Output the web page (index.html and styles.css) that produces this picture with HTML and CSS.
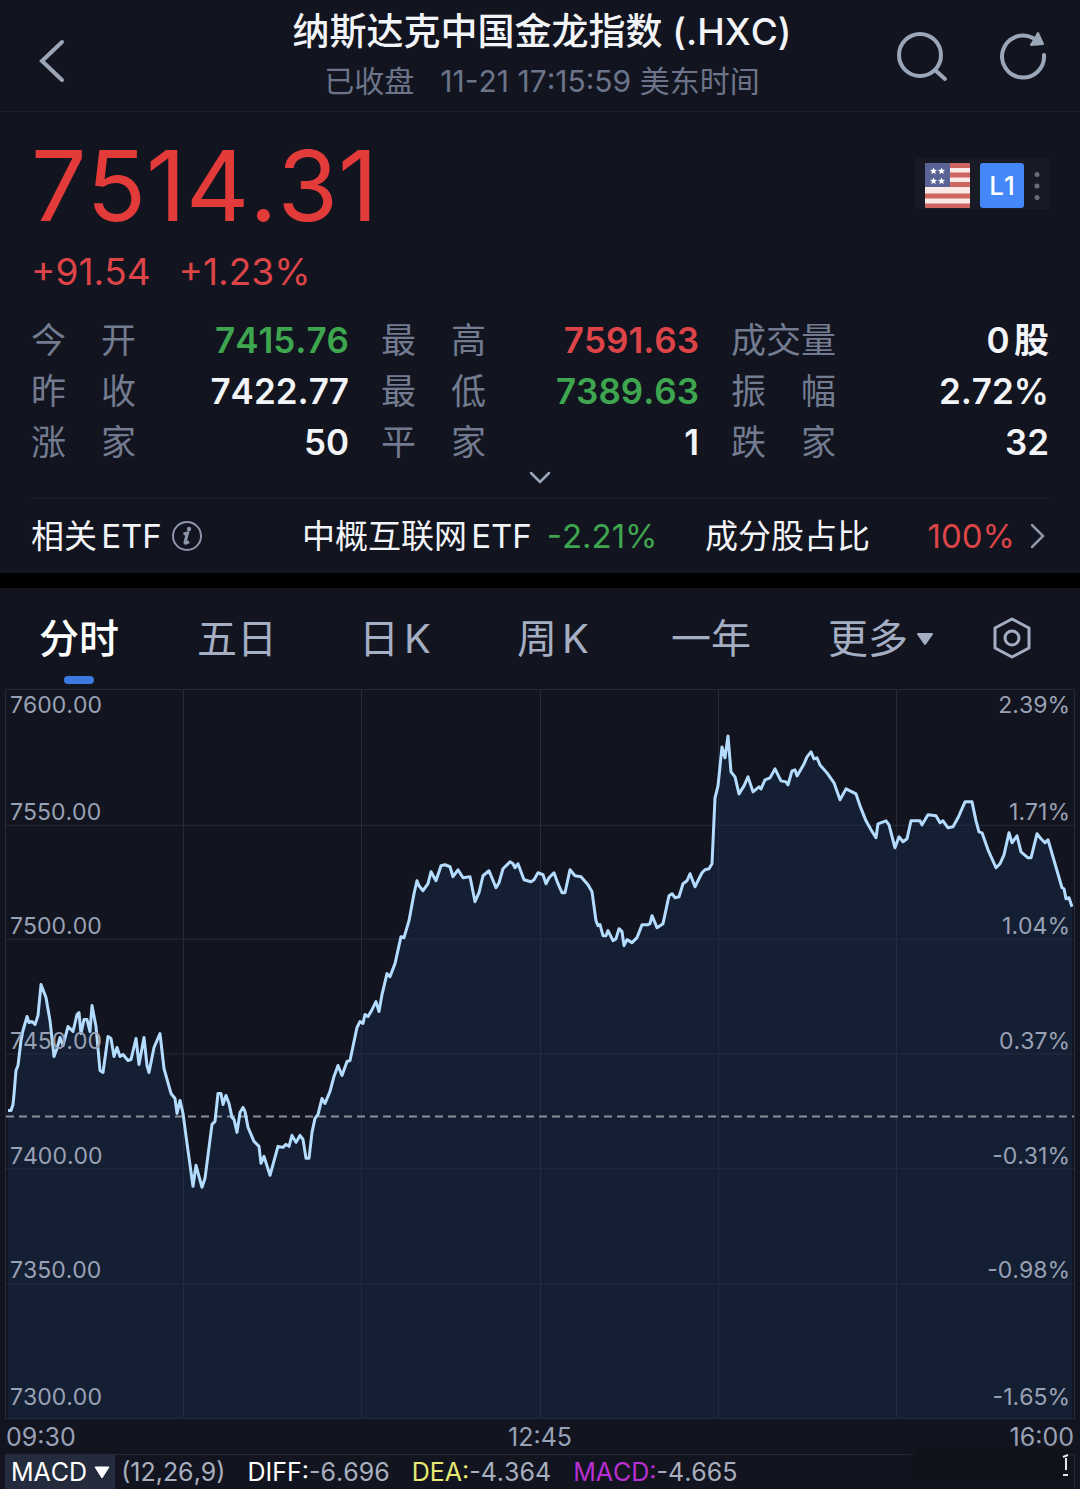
FILE: index.html
```html
<!DOCTYPE html>
<html lang="zh-CN">
<head>
<meta charset="utf-8">
<meta name="viewport" content="width=device-width, initial-scale=1">
<title>纳斯达克中国金龙指数 (.HXC)</title>
<link rel="stylesheet" href="styles.css">
</head>
<body>
<header class="topbar">
  <button class="icon-btn back" aria-label="返回">
    <svg width="28" height="44" viewBox="0 0 28 44"><path d="M24 3 4 22l20 19" fill="none" stroke="currentColor" stroke-width="4" stroke-linecap="round"/></svg>
  </button>
  <div class="heading">
    <h1 class="title">纳斯达克中国金龙指数 (.HXC)</h1>
    <p class="status"><span>已收盘</span><time>11-21 17:15:59 美东时间</time></p>
  </div>
  <div class="actions">
    <button class="icon-btn" aria-label="搜索">
      <svg width="52" height="52" viewBox="0 0 52 52" fill="none" stroke="currentColor" stroke-width="4" stroke-linecap="round"><circle cx="24" cy="25" r="21"/><path d="m39 40 10 9"/></svg>
    </button>
    <button class="icon-btn" aria-label="刷新">
      <svg width="48" height="48" viewBox="0 0 48 48"><path d="M44 23a21 21 0 1 1-11-17" fill="none" stroke="currentColor" stroke-width="4" stroke-linecap="round"/><path d="m38 1 5 11-12 1z" fill="currentColor" stroke="currentColor" stroke-width="2" stroke-linejoin="round"/></svg>
    </button>
  </div>
</header>

<main>
<section class="quote">
  <div class="quote-head">
    <div>
      <p class="price">7514.31</p>
      <p class="change"><span>+91.54</span><span>+1.23%</span></p>
    </div>
    <button class="market" aria-label="美股 L1 行情">
      <svg class="flag" width="45" height="45" viewBox="0 0 45 45">
        <clipPath id="flag-clip"><rect width="45" height="45" rx="2"/></clipPath>
        <g clip-path="url(#flag-clip)">
          <rect width="45" height="45" fill="#fbe9e8"/>
          <path d="M0 2.500h45M0 12h45M0 21.500h45M0 33h45M0 43h45" stroke="#cf655f" stroke-width="5"/>
          <rect width="25" height="24" fill="#5a6396"/>
          <path id="star" d="m8.500 4.500 1 2.300 2.500.2-1.900 1.600.6 2.400-2.200-1.300L6.300 11l.6-2.400L5 7l2.500-.2z" fill="#fff"/>
          <use href="#star" x="8"/><use href="#star" y="10"/><use href="#star" x="8" y="10"/>
        </g>
      </svg>
      <span class="level">L1</span>
      <svg width="6" height="28" viewBox="0 0 6 28" fill="#696d7b"><circle cx="3" cy="2.500" r="2.500"/><circle cx="3" cy="14" r="2.500"/><circle cx="3" cy="25.500" r="2.500"/></svg>
    </button>
  </div>

  <dl class="stats">
    <div class="stat"><dt>今开</dt><dd class="down">7415.76</dd></div>
    <div class="stat"><dt>最高</dt><dd class="up">7591.63</dd></div>
    <div class="stat"><dt>成交量</dt><dd>0股</dd></div>
    <div class="stat"><dt>昨收</dt><dd>7422.77</dd></div>
    <div class="stat"><dt>最低</dt><dd class="down">7389.63</dd></div>
    <div class="stat"><dt>振幅</dt><dd>2.72%</dd></div>
    <div class="stat"><dt>涨家</dt><dd>50</dd></div>
    <div class="stat"><dt>平家</dt><dd>1</dd></div>
    <div class="stat"><dt>跌家</dt><dd>32</dd></div>
  </dl>
  <button class="icon-btn expand" aria-label="展开">
    <svg width="22" height="14" viewBox="0 0 22 14"><path d="m2 2 9 9 9-9" fill="none" stroke="currentColor" stroke-width="2.500" stroke-linecap="round"/></svg>
  </button>

  <div class="etf">
    <div class="etf-cell">相关ETF
      <svg class="info" width="32" height="32" viewBox="0 0 32 32"><circle cx="16" cy="16" r="14" fill="none" stroke="currentColor" stroke-width="2"/><circle cx="18" cy="9" r="2.200" fill="currentColor"/><path d="m12.500 14 4-1-2.500 9.500q-.3 2 4-1" fill="none" stroke="currentColor" stroke-width="3"/></svg>
    </div>
    <a class="etf-cell" href="#etf">中概互联网ETF<span class="down">-2.21%</span></a>
    <a class="etf-cell share" href="#share">成分股占比<span class="up">100%</span>
      <svg width="16" height="28" viewBox="0 0 16 28"><path d="m2 3 11 11L2 25" fill="none" stroke="#8d95aa" stroke-width="2.500" stroke-linecap="round"/></svg>
    </a>
  </div>
</section>

<section class="panel">
  <nav class="tabs">
    <button class="tab active">分时</button>
    <button class="tab">五日</button>
    <button class="tab">日K</button>
    <button class="tab">周K</button>
    <button class="tab">一年</button>
    <button class="tab more">更多<svg width="18" height="14" viewBox="0 0 18 14"><path d="M2 2h14L9 12z" fill="currentColor" stroke="currentColor" stroke-width="2" stroke-linejoin="round"/></svg></button>
    <button class="tab" aria-label="设置"><svg width="40" height="44" viewBox="0 0 40 44" fill="none" stroke="currentColor" stroke-width="3" stroke-linejoin="round"><path d="m20 2 17 9v20l-17 9-17-9V11z"/><circle cx="20" cy="21" r="7"/></svg></button>
  </nav>

  <div class="chart">
    <svg class="plot" viewBox="6 689 1068 729" preserveAspectRatio="none">
      <path class="area" d="M8 1110 11 1110 13 1104 14 1094 16 1070 18 1065 21 1040 23 1030 27 1016 29 1022 32 1021 35 1024 38 1015 41 984 46 997 50 1020 54 1056 57 1048 60 1037 63 1045 68 1026 73 1031 77 1014 79 1012 81 1033 84 1019 87 1019 90 1031 92 1005 96 1026 100 1070 103 1072 108 1036 111 1038 114 1056 117 1047 120 1056 123 1054 128 1060 131 1059 136 1038 139 1064 144 1037 147 1065 149 1072 154 1047 160 1033 164 1068 171 1093 175 1098 177 1113 180 1100 183 1113 187 1143 193 1186 196 1165 202 1187 205 1178 212 1124 215 1121 218 1093 221 1093 223 1104 226 1095 229 1103 232 1117 234 1119 237 1132 240 1112 243 1107 245 1111 248 1127 254 1141 259 1146 261 1163 264 1156 270 1175 278 1146 283 1147 286 1144 289 1146 292 1135 296 1142 300 1135 303 1139 306 1158 309 1158 312 1132 315 1118 318 1114 322 1098 325 1103 330 1091 334 1076 338 1065 342 1075 347 1061 350 1060 357 1027 360 1021 363 1023 365 1014 368 1016 371 1011 376 1001 379 1011 382 994 387 973 390 976 395 963 401 936 404 937 409 920 414 893 417 880 419 885 423 890 428 883 431 871 436 880 441 865 445 864 450 866 453 876 458 869 463 877 470 876 475 901 479 892 483 875 489 870 496 887 499 882 503 868 510 861 513 863 515 867 518 863 524 879 531 881 534 879 538 872 543 874 546 883 549 877 554 872 558 883 562 892 565 892 570 869 575 875 581 876 588 884 592 891 596 920 598 925 600 924 603 935 606 935 608 930 613 940 616 938 619 928 622 931 624 945 627 939 632 942 637 937 642 924 648 924 650 923 652 915 657 927 663 923 669 895 672 893 675 897 679 896 683 883 687 880 690 873 695 886 702 872 705 869 709 868 712 863 715 797 718 785 722 746 725 757 728 735 731 771 735 776 739 793 744 785 748 776 753 791 759 786 761 788 765 779 770 777 775 768 781 780 786 781 788 784 792 770 795 769 797 775 804 763 807 756 811 751 814 758 817 757 820 764 827 772 834 782 840 799 846 788 856 793 860 805 866 820 871 829 876 837 878 823 886 820 889 824 895 847 899 836 903 841 907 838 911 820 920 820 922 824 928 814 936 815 940 822 943 820 948 827 953 826 958 817 965 801 972 801 976 820 979 831 982 832 988 849 996 867 1000 863 1004 854 1009 832 1012 842 1017 835 1021 851 1028 857 1031 857 1037 833 1041 838 1045 842 1048 839 1055 863 1062 887 1064 888 1066 898 1069 897 1072 906V1418H8Z"/>
      <path class="grid-line" d="M6 824.500H1074M6 938.500H1074M6 1053.500H1074M6 1168.500H1074M6 1283.500H1074M183.500 689V1418M361.500 689V1418M540.500 689V1418M718.500 689V1418M896.500 689V1418"/>
      <path class="prev-close" d="M6 1116H1074"/>
      <path class="line" d="M8 1110 11 1110 13 1104 14 1094 16 1070 18 1065 21 1040 23 1030 27 1016 29 1022 32 1021 35 1024 38 1015 41 984 46 997 50 1020 54 1056 57 1048 60 1037 63 1045 68 1026 73 1031 77 1014 79 1012 81 1033 84 1019 87 1019 90 1031 92 1005 96 1026 100 1070 103 1072 108 1036 111 1038 114 1056 117 1047 120 1056 123 1054 128 1060 131 1059 136 1038 139 1064 144 1037 147 1065 149 1072 154 1047 160 1033 164 1068 171 1093 175 1098 177 1113 180 1100 183 1113 187 1143 193 1186 196 1165 202 1187 205 1178 212 1124 215 1121 218 1093 221 1093 223 1104 226 1095 229 1103 232 1117 234 1119 237 1132 240 1112 243 1107 245 1111 248 1127 254 1141 259 1146 261 1163 264 1156 270 1175 278 1146 283 1147 286 1144 289 1146 292 1135 296 1142 300 1135 303 1139 306 1158 309 1158 312 1132 315 1118 318 1114 322 1098 325 1103 330 1091 334 1076 338 1065 342 1075 347 1061 350 1060 357 1027 360 1021 363 1023 365 1014 368 1016 371 1011 376 1001 379 1011 382 994 387 973 390 976 395 963 401 936 404 937 409 920 414 893 417 880 419 885 423 890 428 883 431 871 436 880 441 865 445 864 450 866 453 876 458 869 463 877 470 876 475 901 479 892 483 875 489 870 496 887 499 882 503 868 510 861 513 863 515 867 518 863 524 879 531 881 534 879 538 872 543 874 546 883 549 877 554 872 558 883 562 892 565 892 570 869 575 875 581 876 588 884 592 891 596 920 598 925 600 924 603 935 606 935 608 930 613 940 616 938 619 928 622 931 624 945 627 939 632 942 637 937 642 924 648 924 650 923 652 915 657 927 663 923 669 895 672 893 675 897 679 896 683 883 687 880 690 873 695 886 702 872 705 869 709 868 712 863 715 797 718 785 722 746 725 757 728 735 731 771 735 776 739 793 744 785 748 776 753 791 759 786 761 788 765 779 770 777 775 768 781 780 786 781 788 784 792 770 795 769 797 775 804 763 807 756 811 751 814 758 817 757 820 764 827 772 834 782 840 799 846 788 856 793 860 805 866 820 871 829 876 837 878 823 886 820 889 824 895 847 899 836 903 841 907 838 911 820 920 820 922 824 928 814 936 815 940 822 943 820 948 827 953 826 958 817 965 801 972 801 976 820 979 831 982 832 988 849 996 867 1000 863 1004 854 1009 832 1012 842 1017 835 1021 851 1028 857 1031 857 1037 833 1041 838 1045 842 1048 839 1055 863 1062 887 1064 888 1066 898 1069 897 1072 906"/>
    </svg>
    <div class="scale">
      <div class="tick"><span>7600.00</span><span>2.39%</span></div>
      <div class="tick"><span>7550.00</span><span>1.71%</span></div>
      <div class="tick"><span>7500.00</span><span>1.04%</span></div>
      <div class="tick"><span>7450.00</span><span>0.37%</span></div>
      <div class="tick"><span>7400.00</span><span>-0.31%</span></div>
      <div class="tick"><span>7350.00</span><span>-0.98%</span></div>
      <div class="tick"><span>7300.00</span><span>-1.65%</span></div>
    </div>
  </div>
  <div class="times"><span>09:30</span><span>12:45</span><span>16:00</span></div>
  <div class="macd">
    <button class="indicator">MACD<svg width="16" height="13" viewBox="0 0 16 13"><path d="M1 1h14L8 12z" fill="currentColor" stroke="currentColor" stroke-linejoin="round"/></svg></button>
    <span>(12,26,9)</span>
    <span class="reading"><b class="diff">DIFF:</b>-6.696</span>
    <span class="reading"><b class="dea">DEA:</b>-4.364</span>
    <span class="reading"><b class="bar">MACD:</b>-4.665</span>
    <div class="smudge"></div>
    <svg class="remnant" width="10" height="24" viewBox="0 0 10 24"><path d="m3 4 5-2M6 5v12M3 22h5" fill="none" stroke="#e8e8ec" stroke-width="2"/></svg>
  </div>
</section>
</main>
</body>
</html>
```

FILE: styles.css
```css
* { box-sizing: border-box; }

body {
  margin: 0;
  background: #12151f;
  color: #f3f4f8;
  font-family: Inter, "Noto Sans CJK SC", sans-serif;
  font-kerning: none;
  text-autospace: normal;
  overflow-x: hidden;
}

h1, p, dl, dd { margin: 0; }
svg { display: block; flex: none; }
a { color: inherit; text-decoration: none; }
button {
  margin: 0;
  padding: 0;
  border: 0;
  background: none;
  color: inherit;
  font: inherit;
  font-kerning: none;
  text-autospace: inherit;
}

.up { color: #dc4448; }
.down { color: #3fa650; }

.icon-btn { color: #9ba6b8; }

/* Top bar */
.topbar {
  display: grid;
  grid-template-columns: 1fr auto 1fr;
  align-items: center;
  height: 112px;
  padding: 0 34px 0 38px;
  border-bottom: 1px solid #1d212c;
}
.back { justify-self: start; padding-top: 10px; }
.heading { text-align: center; }
.title { font-size: 37px; line-height: 50px; font-weight: 500; }
.status {
  display: flex;
  justify-content: center;
  gap: 26px;
  color: #6c7489;
  font-size: 30px;
  line-height: 48px;
}
.actions { display: flex; justify-content: flex-end; align-items: center; gap: 52px; margin-right: -2px; }

/* Quote */
.quote { padding: 23px 31px 0; border-bottom: 15px solid #000; }
.quote-head { display: flex; justify-content: space-between; align-items: flex-start; }
.price { color: #e33b3a; font-size: 98px; line-height: 102px; }
.change {
  display: flex;
  gap: 28px;
  padding-top: 13px;
  color: #dc4448;
  font-size: 37px;
  line-height: 44px;
}
.market {
  display: flex;
  align-items: center;
  gap: 10px;
  margin-top: 23px;
  padding: 5px 9px 1px 10px;
  background: #181b26;
}
.level {
  width: 44px;
  border-radius: 3px;
  background: #4387f8;
  color: #fff;
  font-size: 26px;
  line-height: 45px;
  font-weight: 500;
}

.stats {
  display: grid;
  grid-template-columns: repeat(3, 1fr);
  column-gap: 32px;
  padding-top: 21px;
}
.stat { display: flex; justify-content: space-between; font-size: 35px; line-height: 51px; }
.stat dt { width: 3em; color: #737b90; text-align-last: justify; }
.stat dd { font-weight: 600; }
.expand { display: flex; justify-content: center; align-items: center; width: 100%; height: 30px; padding-bottom: 10px; }

.etf {
  display: grid;
  grid-template-columns: 271fr 403fr 344fr;
  border-top: 1px solid #1c202b;
  font-size: 33px;
  line-height: 74px;
}
.etf-cell { display: flex; align-items: center; gap: 15px; white-space: nowrap; }
.info { color: #8d95aa; margin-left: -6px; }
.share { padding-right: 3px; }
.share .up { margin-left: auto; }

/* Chart panel */
.tabs {
  display: grid;
  grid-template-columns: repeat(5, 158fr) 182fr 80fr 28fr;
  height: 101px;
  color: #a5aec3;
  font-size: 40px;
  line-height: 100px;
}
.tab { position: relative; display: flex; justify-content: center; align-items: center; }
.more { gap: 8px; }
.active { color: #fff; font-weight: 500; }
.active::after {
  content: "";
  position: absolute;
  bottom: 5px;
  width: 30px;
  height: 8px;
  border-radius: 4px;
  background: #3d7ae0;
}

.chart { position: relative; margin: 0 5px; border: 1px solid #242a3b; }
.plot { width: 100%; height: 728px; }
.plot path { vector-effect: non-scaling-stroke; }
.area { fill: #151f33; }
.grid-line { fill: none; stroke: #242b40; }
.prev-close { stroke: #8a8f9c; stroke-width: 2; stroke-dasharray: 8 5; }
.line { fill: none; stroke: #b4dcff; stroke-width: 3; stroke-linejoin: round; }

.scale {
  position: absolute;
  inset: 0;
  display: grid;
  grid-template-rows: 29fr 107fr repeat(4, 115fr) 134fr;
  padding: 0 4px;
  color: #99a1b5;
  font-size: 23px;
  line-height: 28px;
}
.tick { display: flex; justify-content: space-between; align-items: flex-end; }
.tick:last-child { padding-bottom: 7px; }

.times {
  display: grid;
  grid-template-columns: 1fr auto 1fr;
  padding: 2px 6px 0;
  color: #99a1b5;
  font-size: 25px;
  line-height: 33px;
}
.times :last-child { text-align: right; }

.macd {
  position: relative;
  display: flex;
  align-items: center;
  margin: 0 5px;
  border: solid #242a3b;
  border-width: 1px 1px 0;
  color: #a9afbf;
  font-size: 25px;
  line-height: 34px;
}
.indicator {
  display: flex;
  align-items: center;
  gap: 7px;
  margin-right: 6px;
  padding: 1px 5px 0;
  background: #242b3d;
  color: #fff;
  line-height: 33px;
}
.reading { margin-left: 22px; }
.reading b { font-weight: 400; }
.diff { color: #fff; }
.dea { color: #e6ea72; }
.bar { color: #b92fd2; }
.smudge {
  position: absolute;
  right: 6px;
  top: -6px;
  width: 156px;
  height: 32px;
  background: #101219;
  filter: blur(3px);
}
.remnant { position: absolute; right: 4px; top: -2px; }
```
